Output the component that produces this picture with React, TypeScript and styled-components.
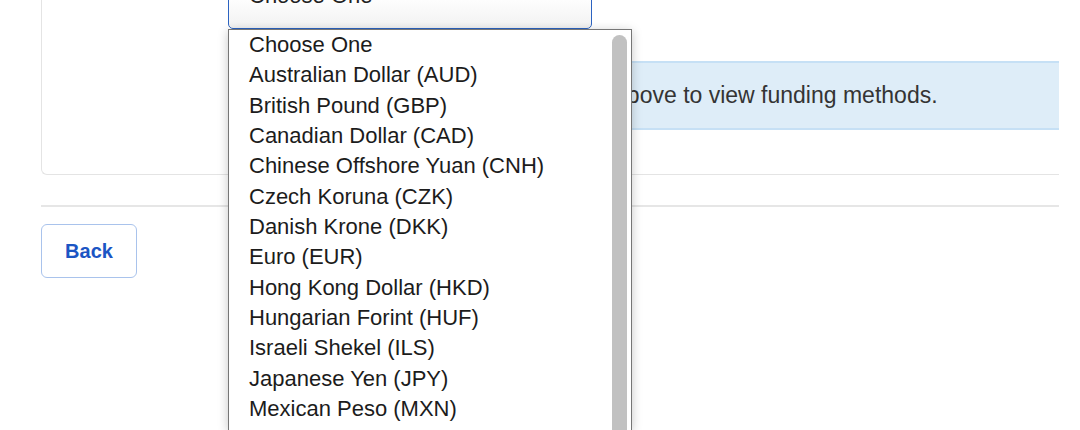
import { FC } from "react";
import styled, { createGlobalStyle } from "styled-components";

const GlobalStyle = createGlobalStyle`
   body {
      margin: 0;
      padding: 0;
      min-height: 430px;
      background: #ffffff;
      font-family: "Liberation Sans", Arial, sans-serif;
   }
`;

const Page = styled.div`
   margin-top: -60px;
   margin-left: 41px;
   width: 1018px;
   min-height: 490px;
`;

// the card runs on past the right edge of the view, so no right border shows
const Card = styled.div`
   box-sizing: border-box;
   border: 1px solid #e4e4e4;
   border-right: none;
   border-radius: 6px 0 0 6px;
   padding: 32px 0 44px 186px;
   display: flex;
   flex-direction: column;
   gap: 32px;
`;

const SelectWrapper = styled.div`
   position: relative;
   width: 364px;
`;

const SelectBox = styled.div`
   box-sizing: border-box;
   height: 56px;
   padding: 10px 8px 0 20px;
   border: 1.5px solid #2c63c1;
   border-radius: 5px;
   background: linear-gradient(#ffffff 40%, #f2f2f2);
   display: flex;
   justify-content: space-between;
   font-size: 22px;
   line-height: 24px;
   color: #222222;
`;

const Caret = styled.span`
   font-size: 10px;
   color: #222222;
   line-height: 24px;
   margin-top: -2px;
`;

const Dropdown = styled.div`
   position: absolute;
   top: 56px;
   left: 0;
   width: 404px;
   height: 401px;
   box-sizing: border-box;
   background: #ffffff;
   border: 1px solid #767676;
   border-bottom: none;
   box-shadow: 0 2px 10px rgba(0, 0, 0, 0.22);
   display: flex;
   z-index: 10;
`;

const OptionList = styled.ul`
   flex: 1;
   margin: 0;
   padding: 0;
   list-style: none;
   overflow: hidden;
`;

const ScrollTrack = styled.div`
   width: 22px;
   padding: 5px 4px 0 3px;
   box-sizing: border-box;
   overflow: hidden;
`;

const ScrollThumb = styled.div`
   height: 420px;
   background: #c1c1c1;
   border-radius: 8px;
`;

const Option = styled.li`
   padding-left: 20px;
   font-size: 22px;
   line-height: 30.33px;
   color: #1c1c1c;
   white-space: nowrap;
`;

const InfoBox = styled.div`
   box-sizing: border-box;
   height: 69px;
   border-top: 2px solid #c6e0f5;
   border-bottom: 2px solid #c6e0f5;
   background: #deedf8;
   padding: 0 20px 0 202px;
   display: flex;
   align-items: center;
   font-size: 23px;
   color: #343434;
   white-space: nowrap;
   overflow: hidden;
`;

const Divider = styled.hr`
   margin: 30px 0 0 0;
   border: none;
   border-top: 2px solid #e6e6e6;
`;

const BackButton = styled.button`
   margin-top: 17px;
   width: 96px;
   height: 54px;
   box-sizing: border-box;
   border: 1.5px solid #a9c3ec;
   border-radius: 6px;
   background: #ffffff;
   color: #1b55c4;
   font-family: "Liberation Sans", Arial, sans-serif;
   font-size: 20px;
   font-weight: 700;
   cursor: pointer;
`;

const currencies = [
   "Choose One",
   "Australian Dollar (AUD)",
   "British Pound (GBP)",
   "Canadian Dollar (CAD)",
   "Chinese Offshore Yuan (CNH)",
   "Czech Koruna (CZK)",
   "Danish Krone (DKK)",
   "Euro (EUR)",
   "Hong Kong Dollar (HKD)",
   "Hungarian Forint (HUF)",
   "Israeli Shekel (ILS)",
   "Japanese Yen (JPY)",
   "Mexican Peso (MXN)",
   "New Zealand Dollar (NZD)",
   "Norwegian Krone (NOK)",
];

const CurrencySelect: FC = () => {
   return (
      <SelectWrapper>
         <SelectBox>
            <span>Choose One</span>
            <Caret>▼</Caret>
         </SelectBox>
         <Dropdown>
            <OptionList>
               {currencies.map((c) => (
                  <Option key={c}>{c}</Option>
               ))}
            </OptionList>
            <ScrollTrack>
               <ScrollThumb />
            </ScrollTrack>
         </Dropdown>
      </SelectWrapper>
   );
};

export default function App() {
   return (
      <>
         <GlobalStyle />
         <Page>
            <Card>
               <CurrencySelect />
               <InfoBox>Select a currency above to view funding methods.</InfoBox>
            </Card>
            <Divider />
            <BackButton>Back</BackButton>
         </Page>
      </>
   );
}
